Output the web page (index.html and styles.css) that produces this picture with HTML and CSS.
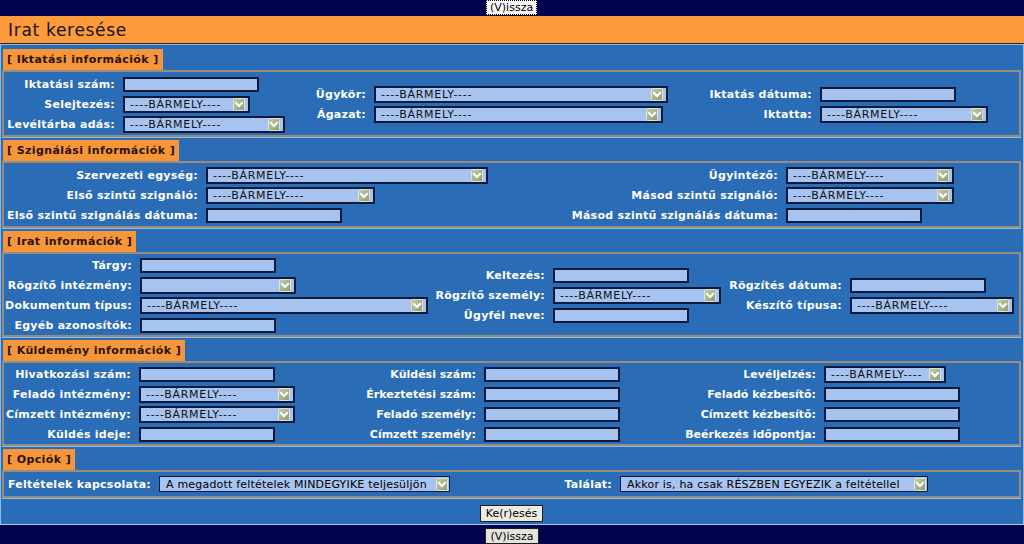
FILE: index.html
```html
<!DOCTYPE html>
<html lang="hu">
<head>
<meta charset="utf-8">
<title>Irat keresése</title>
<link rel="stylesheet" href="styles.css">
</head>
<body>
<svg width="0" height="0" class="defs" aria-hidden="true">
  <defs>
    <linearGradient id="ag" x1="0" y1="0" x2="1" y2="1">
      <stop offset="0" stop-color="#c4cfaa"/>
      <stop offset="1" stop-color="#8e9b72"/>
    </linearGradient>
    <symbol id="arrow" viewBox="0 0 12 13">
      <rect x="0.5" y="0.5" width="11" height="12" rx="1" fill="url(#ag)" stroke="#dfe5d2"/>
      <path d="M3 5 L6 8 L9 5" fill="none" stroke="#fff" stroke-width="2" stroke-linecap="square"/>
    </symbol>
  </defs>
</svg>

<div class="navbar"><button class="btn btn-focus">(V)issza</button></div>
<h1 class="title">Irat keresése</h1>

<main class="main">
  <section class="sect">
    <div class="tab">[ Iktatási információk ]</div>
    <div class="box g1">
      <div class="col lw111">
        <label>Iktatási szám:</label><span class="inp"></span>
        <label>Selejtezés:</label><span class="sel w127"><span class="val">----BÁRMELY----</span><svg class="arr"><use href="#arrow"/></svg></span>
        <label>Levéltárba adás:</label><span class="sel w162"><span class="val">----BÁRMELY----</span><svg class="arr"><use href="#arrow"/></svg></span>
      </div>
      <div class="col lw66">
        <label>Ügykör:</label><span class="sel w294"><span class="val">----BÁRMELY----</span><svg class="arr"><use href="#arrow"/></svg></span>
        <label>Ágazat:</label><span class="sel w289"><span class="val">----BÁRMELY----</span><svg class="arr"><use href="#arrow"/></svg></span>
      </div>
      <div class="col lw122">
        <label>Iktatás dátuma:</label><span class="inp"></span>
        <label>Iktatta:</label><span class="sel w168"><span class="val">----BÁRMELY----</span><svg class="arr"><use href="#arrow"/></svg></span>
      </div>
    </div>
  </section>

  <section class="sect">
    <div class="tab">[ Szignálási információk ]</div>
    <div class="box g2">
      <div class="col lw194">
        <label>Szervezeti egység:</label><span class="sel w282"><span class="val">----BÁRMELY----</span><svg class="arr"><use href="#arrow"/></svg></span>
        <label>Első szintű szignáló:</label><span class="sel w169"><span class="val">----BÁRMELY----</span><svg class="arr"><use href="#arrow"/></svg></span>
        <label>Első szintű szignálás dátuma:</label><span class="inp"></span>
      </div>
      <div class="col lw218">
        <label>Ügyintéző:</label><span class="sel w168"><span class="val">----BÁRMELY----</span><svg class="arr"><use href="#arrow"/></svg></span>
        <label>Másod szintű szignáló:</label><span class="sel w168"><span class="val">----BÁRMELY----</span><svg class="arr"><use href="#arrow"/></svg></span>
        <label>Másod szintű szignálás dátuma:</label><span class="inp"></span>
      </div>
    </div>
  </section>

  <section class="sect">
    <div class="tab">[ Irat információk ]</div>
    <div class="box four g3">
      <div class="col lw128">
        <label>Tárgy:</label><span class="inp"></span>
        <label>Rögzítő intézmény:</label><span class="sel w156"><span class="val"></span><svg class="arr"><use href="#arrow"/></svg></span>
        <label>Dokumentum típus:</label><span class="sel w288"><span class="val">----BÁRMELY----</span><svg class="arr"><use href="#arrow"/></svg></span>
        <label>Egyéb azonosítók:</label><span class="inp"></span>
      </div>
      <div class="col lw125">
        <label>Keltezés:</label><span class="inp"></span>
        <label>Rögzítő személy:</label><span class="sel w168"><span class="val">----BÁRMELY----</span><svg class="arr"><use href="#arrow"/></svg></span>
        <label>Ügyfél neve:</label><span class="inp"></span>
      </div>
      <div class="col lw122">
        <label>Rögzítés dátuma:</label><span class="inp"></span>
        <label>Készítő típusa:</label><span class="sel w164"><span class="val">----BÁRMELY----</span><svg class="arr"><use href="#arrow"/></svg></span>
      </div>
    </div>
  </section>

  <section class="sect">
    <div class="tab">[ Küldemény információk ]</div>
    <div class="box four g4">
      <div class="col lw127">
        <label>Hivatkozási szám:</label><span class="inp"></span>
        <label>Feladó intézmény:</label><span class="sel w156"><span class="val">----BÁRMELY----</span><svg class="arr"><use href="#arrow"/></svg></span>
        <label>Címzett intézmény:</label><span class="sel w156"><span class="val">----BÁRMELY----</span><svg class="arr"><use href="#arrow"/></svg></span>
        <label>Küldés ideje:</label><span class="inp"></span>
      </div>
      <div class="col lw126 narrow">
        <label>Küldési szám:</label><span class="inp"></span>
        <label>Érkeztetési szám:</label><span class="inp"></span>
        <label>Feladó személy:</label><span class="inp"></span>
        <label>Címzett személy:</label><span class="inp"></span>
      </div>
      <div class="col lw156 narrow">
        <label>Levéljelzés:</label><span class="sel w122"><span class="val">----BÁRMELY----</span><svg class="arr"><use href="#arrow"/></svg></span>
        <label>Feladó kézbesítő:</label><span class="inp"></span>
        <label>Címzett kézbesítő:</label><span class="inp"></span>
        <label>Beérkezés időpontja:</label><span class="inp"></span>
      </div>
    </div>
  </section>

  <section class="sect">
    <div class="tab">[ Opciók ]</div>
    <div class="box one g5">
      <div class="col lw147">
        <label>Feltételek kapcsolata:</label><span class="sel opt w291"><span class="val">A megadott feltételek MINDEGYIKE teljesüljön</span><svg class="arr"><use href="#arrow"/></svg></span>
      </div>
      <div class="col lw72">
        <label>Találat:</label><span class="sel opt w308"><span class="val">Akkor is, ha csak RÉSZBEN EGYEZIK a feltétellel</span><svg class="arr"><use href="#arrow"/></svg></span>
      </div>
    </div>
  </section>

  <div class="actions"><button class="btn btn-search">Ke(r)esés</button></div>
</main>

<div class="footbar"><button class="btn btn-back">(V)issza</button></div>
</body>
</html>
```

FILE: styles.css
```css
* { box-sizing: border-box; margin: 0; padding: 0; }

html, body { background: #02024f; }

body {
  width: 1024px;
  height: 544px;
  overflow: hidden;
  font-family: "DejaVu Sans", Verdana, sans-serif;
  font-size: 11px;
}

.defs { position: absolute; width: 0; height: 0; }

.navbar {
  height: 16px;
  display: flex;
  justify-content: center;
  align-items: flex-start;
}

.btn {
  font-family: "DejaVu Sans", Verdana, sans-serif;
  font-size: 11px;
  color: #000;
  background: #ecebe3;
  border: 1px solid #1c1c1c;
  padding: 0 3px;
  line-height: 13px;
}

.btn-focus {
  width: 51px;
  height: 15px;
  background: #f8f8f6;
  border: 1px dotted #000;
  margin-left: -1px;
}

.title {
  height: 28px;
  background: #fd9a3c;
  border-bottom: 1px solid #2e2a26;
  font-size: 17px;
  letter-spacing: 0.7px;
  font-weight: normal;
  line-height: 28px;
  padding-left: 8px;
  color: #141414;
}

.main {
  height: 481px;
  background: #2a6cb5;
  border: 1px solid #8ebce9;
  border-bottom-color: #a9cdf0;
  padding: 4px 2px 0 1px;
}

.sect + .sect { margin-top: 3px; }

.tab {
  width: fit-content;
  height: 21px;
  line-height: 21px;
  margin-left: 1px;
  padding: 0 4px 0 4px;
  background: #f6963a;
  color: #2a1200;
  font-weight: bold;
  font-size: 11px;
  letter-spacing: 0.4px;
}

.box {
  display: grid;
  align-items: center;
  border: 2px solid #9c8b7a;
  box-shadow: 0 1px 0 #8ebce9;
  padding: 2px 0 1px;
}

.box.four { padding: 1px 0 0; }
.box.one { padding: 2px 0 2px; }

.g1 { grid-template-columns: 296px 390px 1fr; }
.g2 { grid-template-columns: 556px 1fr; }
.g3 { grid-template-columns: 416px 300px 1fr; }
.g4 { grid-template-columns: 346px 310px 1fr; }
.g5 { grid-template-columns: 536px 1fr; }

.col {
  display: grid;
  grid-auto-rows: 20px;
  align-items: center;
  justify-items: start;
  column-gap: 8px;
}

.lw66 { grid-template-columns: 66px auto; }
.lw72 { grid-template-columns: 72px auto; }
.lw111 { grid-template-columns: 111px auto; }
.lw122 { grid-template-columns: 122px auto; }
.lw125 { grid-template-columns: 125px auto; }
.lw126 { grid-template-columns: 126px auto; }
.lw127 { grid-template-columns: 127px auto; }
.lw128 { grid-template-columns: 128px auto; }
.lw147 { grid-template-columns: 147px auto; }
.lw156 { grid-template-columns: 156px auto; }
.lw194 { grid-template-columns: 194px auto; }
.lw218 { grid-template-columns: 218px auto; }

.col label {
  justify-self: end;
  white-space: nowrap;
  color: #fff;
  font-weight: bold;
  font-size: 11px;
  letter-spacing: 0.25px;
}

.col.narrow label { letter-spacing: 0; }

.inp {
  display: block;
  width: 136px;
  height: 15px;
  background: #a7c4f0;
  border: 2px solid #0b1a3c;
}

.sel {
  display: flex;
  align-items: center;
  height: 17px;
  background: #a7c4f0;
  border: 2px solid #0b1a3c;
  padding: 0 3px 0 5px;
  color: #111;
  font-size: 11px;
}

.sel .val {
  flex: 1;
  white-space: nowrap;
  overflow: hidden;
  letter-spacing: 0.7px;
}

.sel .arr {
  flex: none;
  width: 12px;
  height: 13px;
}

.sel.opt {
  height: 16px;
  border-width: 1px;
  padding: 0 1px 0 6px;
  color: #000;
}

.sel.opt .val { letter-spacing: 0.2px; }

.w122 { width: 122px; }
.w127 { width: 127px; }
.w156 { width: 156px; }
.w162 { width: 162px; }
.w164 { width: 164px; }
.w168 { width: 168px; }
.w169 { width: 169px; }
.w282 { width: 282px; }
.w288 { width: 288px; }
.w289 { width: 289px; }
.w291 { width: 291px; }
.w294 { width: 294px; }
.w308 { width: 308px; }

.actions {
  height: 28px;
  display: flex;
  justify-content: center;
  align-items: center;
  padding-top: 3px;
}

.btn-search {
  width: 63px;
  height: 17px;
}

.footbar {
  height: 19px;
  display: flex;
  justify-content: center;
  align-items: flex-start;
  padding-top: 3px;
}

.btn-back {
  width: 54px;
  height: 16px;
  background: #e4e3dc;
}
```
